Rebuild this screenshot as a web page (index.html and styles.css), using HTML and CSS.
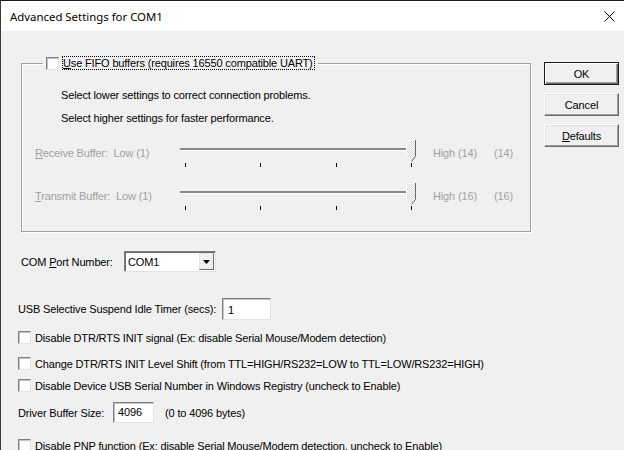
FILE: index.html
```html
<!DOCTYPE html>
<html lang="en">
<head>
    <meta charset="UTF-8">
    <title>Advanced Settings for COM1</title>
    <link rel="stylesheet" href="styles.css">
</head>
<body>
<div class="window">
    <div class="titlebar">
        <span class="title">Advanced Settings for COM1</span>
        <svg class="close" width="11" height="11" viewBox="0 0 11 11">
            <path d="M0.5 0.5 L10.5 10.5 M10.5 0.5 L0.5 10.5" stroke="#000" stroke-width="1" fill="none"/>
        </svg>
    </div>

    <div class="dialog">
        <div class="top-row">
            <fieldset class="group">
                <legend>
                    <span class="check"></span>
                    <span class="focus"><u>U</u>se FIFO buffers (requires 16550 compatible UART)</span>
                </legend>

                <p class="hint first">Select lower settings to correct connection problems.</p>
                <p class="hint">Select higher settings for faster performance.</p>

                <div class="slider-row">
                    <span class="slider-label"><u>R</u>eceive Buffer:&nbsp; Low (1)</span>
                    <div class="slider">
                        <div class="track"></div>
                        <div class="ticks"><i></i><i></i><i></i><i></i></div>
                        <svg class="thumb" width="10" height="22" viewBox="0 0 10 22">
                            <defs>
                                <pattern id="dots" width="2" height="2" patternUnits="userSpaceOnUse">
                                    <rect width="2" height="2" fill="#fff"/>
                                    <rect width="1" height="1" fill="#d8d8d8"/>
                                    <rect x="1" y="1" width="1" height="1" fill="#d8d8d8"/>
                                </pattern>
                            </defs>
                            <path d="M1 1 H9 V16 L5 21 L1 16 Z" fill="url(#dots)"/>
                            <path d="M0.5 17 V0.5 H9" stroke="#fff" fill="none"/>
                            <path d="M9.5 0 V16.5 L5.5 21.5" stroke="#696969" fill="none"/>
                        </svg>
                    </div>
                    <span class="high">High (14)</span>
                    <span class="value">(14)</span>
                </div>

                <div class="slider-row">
                    <span class="slider-label"><u>T</u>ransmit Buffer:&nbsp; Low (1)</span>
                    <div class="slider">
                        <div class="track"></div>
                        <div class="ticks"><i></i><i></i><i></i><i></i></div>
                        <svg class="thumb" width="10" height="22" viewBox="0 0 10 22">
                            <path d="M1 1 H9 V16 L5 21 L1 16 Z" fill="url(#dots)"/>
                            <path d="M0.5 17 V0.5 H9" stroke="#fff" fill="none"/>
                            <path d="M9.5 0 V16.5 L5.5 21.5" stroke="#696969" fill="none"/>
                        </svg>
                    </div>
                    <span class="high">High (16)</span>
                    <span class="value">(16)</span>
                </div>
            </fieldset>

            <div class="buttons">
                <button class="btn default">OK</button>
                <button class="btn">Cancel</button>
                <button class="btn"><u>D</u>efaults</button>
            </div>
        </div>

        <div class="row com-row">
            <span class="com-label">COM <u>P</u>ort Number:</span>
            <div class="combo">
                <span class="combo-text">COM1</span>
                <span class="combo-btn">
                    <svg width="7" height="4" viewBox="0 0 7 4"><path d="M0 0 H7 L3.5 4 Z" fill="#000"/></svg>
                </span>
            </div>
        </div>

        <div class="row usb-row">
            <span class="usb-label">USB Selective Suspend Idle Timer (secs):</span>
            <div class="edit usb-edit">1</div>
        </div>

        <div class="row cb-row cb1">
            <span class="check"></span>
            <span>Disable DTR/RTS INIT signal (Ex: disable Serial Mouse/Modem detection)</span>
        </div>
        <div class="row cb-row cb2">
            <span class="check"></span>
            <span>Change DTR/RTS INIT Level Shift (from TTL=HIGH/RS232=LOW to TTL=LOW/RS232=HIGH)</span>
        </div>
        <div class="row cb-row cb3">
            <span class="check"></span>
            <span>Disable Device USB Serial Number in Windows Registry (uncheck to Enable)</span>
        </div>

        <div class="row driver-row">
            <span class="driver-label">Driver Buffer Size:</span>
            <div class="edit driver-edit">4096</div>
            <span class="bytes">(0 to 4096 bytes)</span>
        </div>

        <div class="row cb-row cb4">
            <span class="check"></span>
            <span>Disable PNP function (Ex: disable Serial Mouse/Modem detection, uncheck to Enable)</span>
        </div>
    </div>
</div>
</body>
</html>
```

FILE: styles.css
```css
body {
    margin: 0;
    background-color: #f0f0f0;
    font-family: 'Liberation Sans', Arial, sans-serif;
    font-size: 11px;
    letter-spacing: -0.15px;
    color: #000;
    overflow: hidden;
}

.window {
    border-top: 1px solid #1a1a1a;
    border-left: 1px solid #3a3a3a;
    min-height: 449px;
}

.titlebar {
    height: 30px;
    background-color: #fff;
    display: flex;
    align-items: center;
    justify-content: space-between;
    padding: 0 9px;
}

.title {
    font-family: 'Noto Sans', sans-serif;
    font-size: 11.4px;
    letter-spacing: 0;
    margin-top: 1px;
}

.close {
    display: block;
}

.dialog {
    padding: 25px 0 0 17px;
}

.top-row {
    display: flex;
    align-items: flex-start;
}

/* group box */
.group {
    box-sizing: border-box;
    width: 510px;
    margin: 0 0 0 3px;
    padding: 0 14px 20px 13px;
    border: 1px solid #a0a0a0;
    box-shadow: inset 1px 1px 0 #fff, 1px 1px 0 #fff;
}

.group legend {
    margin-left: 8px;
    padding: 0 3px;
    display: flex;
    align-items: center;
    line-height: 12px;
}

.focus {
    margin-left: 3px;
    border: 1px dotted #000;
    padding-right: 1px;
}

.hint {
    margin: 9px 0 0 26px;
    line-height: 14px;
}
.hint.first {
    margin-top: 18px;
}

.slider-row {
    display: flex;
    height: 28px;
    margin-top: 15px;
    color: #a0a0a0;
    line-height: 14px;
}

.slider-label {
    width: 145px;
    padding-top: 6px;
}

.slider {
    position: relative;
    width: 236px;
    height: 28px;
}

.track {
    width: 232px;
    height: 2px;
    margin-top: 8px;
    background-color: #8a8a8a;
    border-bottom: 1px solid #fff;
}

.ticks {
    display: flex;
    justify-content: space-between;
    padding: 0 4px 0 5px;
    margin-top: 12px;
}
.ticks i {
    width: 1px;
    height: 4px;
    background-color: #000;
}

.thumb {
    position: absolute;
    right: 0;
    top: 0;
}

.high {
    margin-left: 17px;
    width: 61px;
    padding-top: 6px;
}

.value {
    padding-top: 6px;
}

/* buttons */
.buttons {
    display: flex;
    flex-direction: column;
    gap: 8px;
    margin: 6px 0 0 13px;
}

.btn {
    width: 75px;
    height: 23px;
    padding: 0;
    font-family: inherit;
    font-size: 11px;
    letter-spacing: inherit;
    color: #000;
    background-color: #f0f0f0;
    border: 1px solid;
    border-color: #fff #696969 #696969 #fff;
    box-shadow: inset -1px -1px 0 #a0a0a0, inset 1px 1px 0 #e3e3e3;
}

.btn.default {
    border-color: #1a1a1a;
    box-shadow: inset 1px 1px 0 #fff, inset -1px -1px 0 #696969, inset -2px -2px 0 #a0a0a0;
}

/* checkboxes and edits */
.check {
    box-sizing: border-box;
    width: 13px;
    height: 13px;
    background-color: #fff;
    border: 1px solid;
    border-color: #808080 #e3e3e3 #e3e3e3 #808080;
    box-shadow: inset 1px 1px 0 #c4c4c4;
    flex-shrink: 0;
}

.row {
    display: flex;
    align-items: center;
    white-space: nowrap;
}

.com-row {
    margin: 19px 0 0 3px;
    height: 21px;
}

.com-label {
    width: 103px;
}

.combo {
    box-sizing: border-box;
    width: 92px;
    height: 21px;
    display: flex;
    align-items: center;
    justify-content: space-between;
    background-color: #fff;
    border: 1px solid;
    border-color: #808080 #e3e3e3 #e3e3e3 #808080;
    box-shadow: inset 1px 1px 0 #696969;
    padding: 1px 1px 1px 3px;
}

.combo-btn {
    box-sizing: border-box;
    width: 15px;
    height: 17px;
    display: flex;
    align-items: center;
    justify-content: center;
    background-color: #f0f0f0;
    border: 1px solid;
    border-color: #e3e3e3 #696969 #696969 #e3e3e3;
}

.edit {
    box-sizing: border-box;
    background-color: #fff;
    border: 1px solid;
    border-color: #808080 #e3e3e3 #e3e3e3 #808080;
    box-shadow: inset 1px 1px 0 #c4c4c4;
    padding: 2px 0 0 5px;
    line-height: 14px;
}

.usb-row {
    margin-top: 26px;
    height: 22px;
}

.usb-label {
    width: 204px;
}

.usb-edit {
    width: 49px;
    height: 22px;
    padding-top: 4px;
}

.cb-row {
    height: 13px;
}
.cb-row .check {
    margin-right: 4px;
}

.cb1 { margin-top: 11px; }
.cb2 { margin-top: 13px; }
.cb3 { margin-top: 9px; }
.cb4 { margin-top: 16px; }

.driver-row {
    margin-top: 10px;
    height: 21px;
}

.driver-label {
    width: 95px;
}

.driver-edit {
    width: 41px;
    height: 21px;
    padding-left: 4px;
}

.bytes {
    margin-left: 11px;
}
```
